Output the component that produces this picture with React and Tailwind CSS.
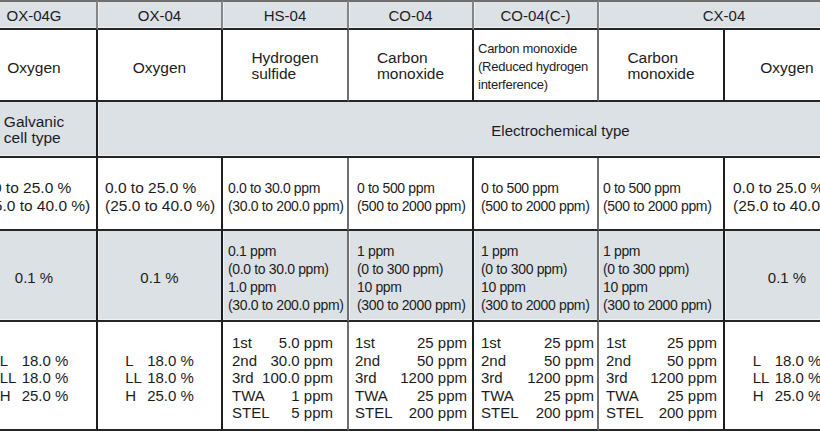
import React from 'react';

// right-hand rule colour for each column (the CO-04 / CO-04(C-) edges print lighter)
const RIGHT = [
  'border-r-[#1e1e1e]',
  'border-r-[#1e1e1e]',
  'border-r-[#6f6f6f]',
  'border-r-[#1e1e1e]',
  'border-r-[#6f6f6f]',
  'border-r-[#1e1e1e]',
  'border-r-[#1e1e1e]',
  'border-r-[#1e1e1e]',
];

const BASE = 'px-0 pb-0 align-middle border-r-2 border-b-2 border-b-[#262626]';
const GRAY = 'bg-[#dce1e5] shadow-[inset_1px_-1px_0_#eef1f4]';
const HEAD = 'p-0 align-middle text-center text-[15px] leading-none bg-[#dce1e5] shadow-[inset_1px_-1px_0_#eef1f4] border-t-2 border-t-[#6e6e6e] border-b-2 border-b-[#262626] border-r-2 border-r-[#858585]';
const PPM = 'text-[14px] tracking-[-0.35px] leading-[18px]';
const LAST = 'pt-[5px] border-b-[#4a4a4a]';

const ALARM_HS = [
  ['1st', '5.0 ppm'],
  ['2nd', '30.0 ppm'],
  ['3rd', '100.0 ppm'],
  ['TWA', '1 ppm'],
  ['STEL', '5 ppm'],
];

const ALARM_CO = [
  ['1st', '25 ppm'],
  ['2nd', '50 ppm'],
  ['3rd', '1200 ppm'],
  ['TWA', '25 ppm'],
  ['STEL', '200 ppm'],
];

const ALARM_O2 = [
  ['L', '18.0 %'],
  ['LL', '18.0 %'],
  ['H', '25.0 %'],
];

const PpmAlarms = ({ rows, className }) => (
  <div className={`text-[15px] leading-[17.5px] ${className}`}>
    {rows.map(([label, value]) => (
      <div key={label} className="flex justify-between">
        <span>{label}</span>
        <span>{value}</span>
      </div>
    ))}
  </div>
);

const O2Alarms = () => (
  <div className="flex justify-center">
    <div className="text-[15px] leading-[17.5px]">
      {ALARM_O2.map(([label, value]) => (
        <div key={label} className="flex">
          <span className="w-[22px]">{label}</span>
          <span>{value}</span>
        </div>
      ))}
    </div>
  </div>
);

const O2Range = ({ pad }) => (
  <div className={`${pad} text-[15.5px] leading-[18px]`}>
    <div>0.0 to 25.0 %</div>
    <div>(25.0 to 40.0 %)</div>
  </div>
);

const CoRange = ({ pad }) => (
  <div className={`${pad} ${PPM}`}>
    <div>0 to 500 ppm</div>
    <div>(500 to 2000 ppm)</div>
  </div>
);

const CoResolution = ({ pad }) => (
  <div className={`${pad} ${PPM}`}>
    <div>1 ppm</div>
    <div>(0 to 300 ppm)</div>
    <div>10 ppm</div>
    <div>(300 to 2000 ppm)</div>
  </div>
);

const StackedName = ({ top, bottom }) => (
  <div className="flex justify-center">
    <div className="text-[15.5px] leading-[16.5px]">
      <div>{top}</div>
      <div>{bottom}</div>
    </div>
  </div>
);

export default function App() {
  return (
    <div className="w-[820px] h-[432px] overflow-hidden bg-white text-[#1c1c1c] font-['Liberation_Sans',Arial,Helvetica,sans-serif]">
      <table className="-ml-[28px] w-[1053px] table-fixed border-separate border-spacing-0">
        <colgroup>
          <col className="w-[126px]" />
          <col className="w-[125px]" />
          <col className="w-[126px]" />
          <col className="w-[125px]" />
          <col className="w-[125px]" />
          <col className="w-[126px]" />
          <col className="w-[126px]" />
          <col className="w-[174px]" />
        </colgroup>
        <tbody>
          {/* Model */}
          <tr>
            <td className={`${HEAD} h-[30px]`}>OX-04G</td>
            <td className={HEAD}>OX-04</td>
            <td className={HEAD}>HS-04</td>
            <td className={HEAD}>CO-04</td>
            <td className={HEAD}>CO-04(C-)</td>
            <td className={HEAD} colSpan={2}>CX-04</td>
            <td className={HEAD}></td>
          </tr>

          {/* Target gas */}
          <tr>
            <td className={`${BASE} ${RIGHT[0]} pt-[5px] h-[72px] text-center text-[15.5px]`}>Oxygen</td>
            <td className={`${BASE} ${RIGHT[1]} pt-[5px] text-center text-[15.5px]`}>Oxygen</td>
            <td className={`${BASE} ${RIGHT[2]} pt-[2px]`}>
              <StackedName top="Hydrogen" bottom="sulfide" />
            </td>
            <td className={`${BASE} ${RIGHT[3]} pt-[2px]`}>
              <StackedName top="Carbon" bottom="monoxide" />
            </td>
            <td className={`${BASE} ${RIGHT[4]} pt-[4px]`}>
              <div className="pl-[4px] text-[13px] tracking-[-0.25px] leading-[18px]">
                <div>Carbon monoxide</div>
                <div>(Reduced hydrogen</div>
                <div>interference)</div>
              </div>
            </td>
            <td className={`${BASE} ${RIGHT[5]} pt-[2px]`}>
              <StackedName top="Carbon" bottom="monoxide" />
            </td>
            <td className={`${BASE} ${RIGHT[6]} pt-[5px] text-center text-[15.5px]`}>Oxygen</td>
            <td className={`${BASE} ${RIGHT[7]}`}></td>
          </tr>

          {/* Detection principle */}
          <tr>
            <td className={`${BASE} ${RIGHT[0]} ${GRAY} h-[56px] pt-[2px]`}>
              <div className="flex justify-center">
                <div className="text-[15.5px] leading-[16.5px]">
                  <div>Galvanic</div>
                  <div>cell type</div>
                </div>
              </div>
            </td>
            <td className={`${BASE} ${RIGHT[7]} ${GRAY} pt-[5px] text-center text-[15px]`} colSpan={7}>
              Electrochemical type
            </td>
          </tr>

          {/* Detection range */}
          <tr>
            <td className={`${BASE} ${RIGHT[0]} h-[73px] pt-[6px]`}>
              <O2Range pad="pl-[8px]" />
            </td>
            <td className={`${BASE} ${RIGHT[1]} pt-[6px]`}>
              <O2Range pad="pl-[7px]" />
            </td>
            <td className={`${BASE} ${RIGHT[2]} pt-[6px]`}>
              <div className={`pl-[5px] ${PPM}`}>
                <div>0.0 to 30.0 ppm</div>
                <div>(30.0 to 200.0 ppm)</div>
              </div>
            </td>
            <td className={`${BASE} ${RIGHT[3]} pt-[6px]`}>
              <CoRange pad="pl-[8px]" />
            </td>
            <td className={`${BASE} ${RIGHT[4]} pt-[6px]`}>
              <CoRange pad="pl-[7px]" />
            </td>
            <td className={`${BASE} ${RIGHT[5]} pt-[6px]`}>
              <CoRange pad="pl-[4px]" />
            </td>
            <td className={`${BASE} ${RIGHT[6]} pt-[6px]`}>
              <O2Range pad="pl-[8px]" />
            </td>
            <td className={`${BASE} ${RIGHT[7]}`}></td>
          </tr>

          {/* Resolution */}
          <tr>
            <td className={`${BASE} ${RIGHT[0]} ${GRAY} pt-[5px] h-[91px] text-center text-[15px]`}>0.1 %</td>
            <td className={`${BASE} ${RIGHT[1]} ${GRAY} pt-[5px] text-center text-[15px]`}>0.1 %</td>
            <td className={`${BASE} ${RIGHT[2]} ${GRAY} pt-[5px]`}>
              <div className={`pl-[5px] ${PPM}`}>
                <div>0.1 ppm</div>
                <div>(0.0 to 30.0 ppm)</div>
                <div>1.0 ppm</div>
                <div>(30.0 to 200.0 ppm)</div>
              </div>
            </td>
            <td className={`${BASE} ${RIGHT[3]} ${GRAY} pt-[5px]`}>
              <CoResolution pad="pl-[8px]" />
            </td>
            <td className={`${BASE} ${RIGHT[4]} ${GRAY} pt-[5px]`}>
              <CoResolution pad="pl-[7px]" />
            </td>
            <td className={`${BASE} ${RIGHT[5]} ${GRAY} pt-[5px]`}>
              <CoResolution pad="pl-[4px]" />
            </td>
            <td className={`${BASE} ${RIGHT[6]} ${GRAY} pt-[5px] text-center text-[15px]`}>0.1 %</td>
            <td className={`${BASE} ${RIGHT[7]} ${GRAY}`}></td>
          </tr>

          {/* Alarm set points */}
          <tr>
            <td className={`${BASE} ${RIGHT[0]} ${LAST} h-[109px]`}>
              <O2Alarms />
            </td>
            <td className={`${BASE} ${RIGHT[1]} ${LAST}`}>
              <O2Alarms />
            </td>
            <td className={`${BASE} ${RIGHT[2]} ${LAST}`}>
              <PpmAlarms rows={ALARM_HS} className="ml-[9px] w-[101px]" />
            </td>
            <td className={`${BASE} ${RIGHT[3]} ${LAST}`}>
              <PpmAlarms rows={ALARM_CO} className="ml-[6px] w-[112px]" />
            </td>
            <td className={`${BASE} ${RIGHT[4]} ${LAST}`}>
              <PpmAlarms rows={ALARM_CO} className="ml-[7px] w-[113px]" />
            </td>
            <td className={`${BASE} ${RIGHT[5]} ${LAST}`}>
              <PpmAlarms rows={ALARM_CO} className="ml-[7px] w-[111px]" />
            </td>
            <td className={`${BASE} ${RIGHT[6]} ${LAST}`}>
              <O2Alarms />
            </td>
            <td className={`${BASE} ${RIGHT[7]} ${LAST}`}></td>
          </tr>
        </tbody>
      </table>
    </div>
  );
}
